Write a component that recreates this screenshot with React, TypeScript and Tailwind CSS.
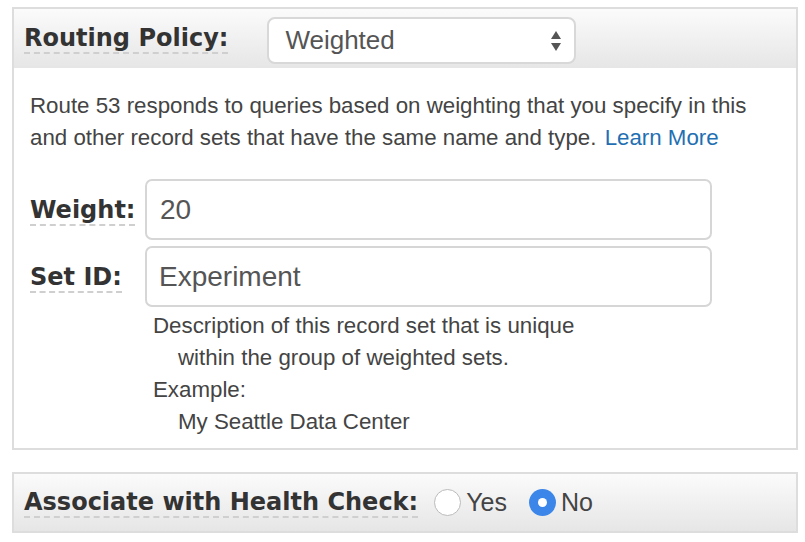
import React from 'react'

const verdana = { fontFamily: '"DejaVu Sans", Verdana, sans-serif' }

function Label({ children }: { children: React.ReactNode }) {
  return (
    <span
      className="font-bold text-[#333] border-b-2 border-dashed border-[#cfcfcf] leading-[28px] text-[24px]"
      style={verdana}
    >
      {children}
    </span>
  )
}

function Radio({ checked }: { checked?: boolean }) {
  return checked ? (
    <span className="w-[27px] h-[27px] rounded-full bg-[#3b86e8] flex items-center justify-center">
      <span className="w-[9px] h-[9px] rounded-full bg-white" />
    </span>
  ) : (
    <span className="w-[27px] h-[27px] rounded-full bg-white border border-[#bbb]" />
  )
}

export default function App() {
  return (
    <div className="w-[805px] h-[542px] bg-white pt-[7px] px-[12px] font-['Liberation_Sans',Arial,sans-serif] text-[#444]">
      <div className="w-[786px] border-2 border-[#ddd]">
        <div className="h-[59px] bg-gradient-to-b from-[#fbfbfb] to-[#e6e6e6] flex items-center pl-[10px] gap-[39px]">
          <Label>Routing Policy:</Label>
          <div className="w-[309px] h-[47px] mt-[4px] bg-white border-2 border-[#d8d8d8] rounded-[8px] flex items-center justify-between pl-[16px] pr-[12px]">
            <span className="text-[26px] text-[#555]">Weighted</span>
            <svg width="12" height="22" viewBox="0 0 12 22">
              <path d="M6 1 L11 9 L1 9 Z" fill="#555" />
              <path d="M1 13 L11 13 L6 21 Z" fill="#555" />
            </svg>
          </div>
        </div>
        <div className="pl-[16px] pt-[22px] pb-[10px]">
          <p className="text-[22.3px] leading-[32px]">
            Route 53 responds to queries based on weighting that you specify in this
            <br />
            and other record sets that have the same name and type.{' '}
            <span className="text-[#1f6fb2] ml-[2px]">Learn More</span>
          </p>
          <div className="mt-[25px] grid grid-cols-[106px_567px] gap-x-[9px] gap-y-[6px] items-center">
            <span className="pt-[2px]"><Label>Weight:</Label></span>
            <div className="h-[61px] border-2 border-[#d6d6d6] rounded-[7px] flex items-center pl-[13px] text-[28px] text-[#555]">20</div>
            <span className="pt-[2px]"><Label>Set ID:</Label></span>
            <div className="h-[61px] border-2 border-[#d6d6d6] rounded-[7px] flex items-center pl-[12px] text-[28px] text-[#555]">Experiment</div>
          </div>
          <div className="pl-[123px] text-[22.3px] leading-[32px] mt-[3px]">
            <div>Description of this record set that is unique</div>
            <div className="pl-[25px]">within the group of weighted sets.</div>
            <div>Example:</div>
            <div className="pl-[25px]">My Seattle Data Center</div>
          </div>
        </div>
      </div>
      <div className="mt-[22px] w-[786px] h-[61px] border-2 border-[#ddd] bg-gradient-to-b from-[#fbfbfb] to-[#e6e6e6] flex items-center pl-[10px]">
        <Label>Associate with Health Check:</Label>
        <div className="flex items-center ml-[16px] text-[25px] text-[#444]">
          <Radio />
          <span className="ml-[5px]">Yes</span>
          <span className="ml-[22px]"><Radio checked /></span>
          <span className="ml-[5px]">No</span>
        </div>
      </div>
    </div>
  )
}
